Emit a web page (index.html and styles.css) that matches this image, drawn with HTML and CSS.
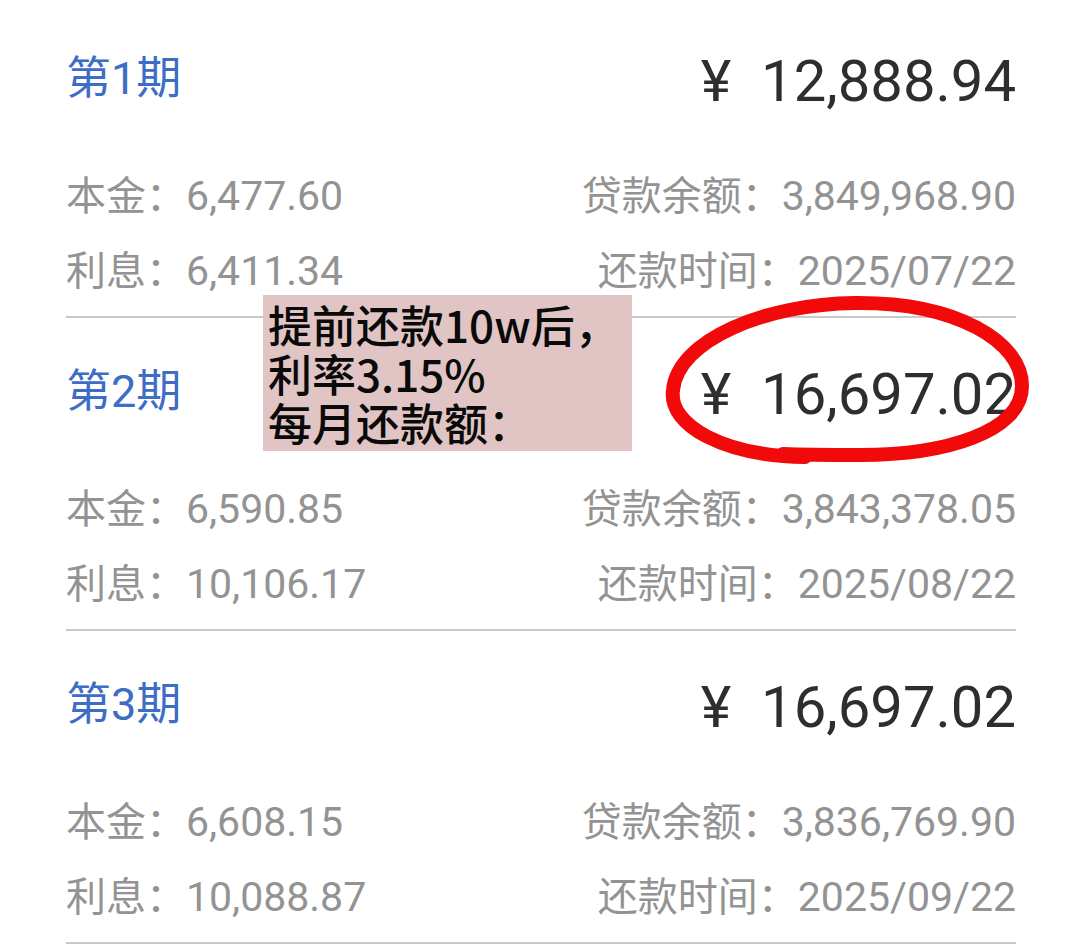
FILE: index.html
```html
<!DOCTYPE html>
<html lang="zh-CN">
<head>
<meta charset="utf-8">
<link rel="stylesheet" href="styles.css">
</head>
<body>
<div class="page">
  <div class="list">
    <section class="period">
      <div class="head">
        <div class="title">第1期</div>
        <div class="amount"><span class="yen">¥</span>12,888.94</div>
      </div>
      <div class="details">
        <div class="line"><span>本金：<span class="num">6,477.60</span></span><span>贷款余额：<span class="num">3,849,968.90</span></span></div>
        <div class="line"><span>利息：<span class="num">6,411.34</span></span><span>还款时间：<span class="num">2025/07/22</span></span></div>
      </div>
    </section>
    <section class="period">
      <div class="head">
        <div class="title">第2期</div>
        <div class="amount"><span class="yen">¥</span>16,697.02</div>
      </div>
      <div class="details">
        <div class="line"><span>本金：<span class="num">6,590.85</span></span><span>贷款余额：<span class="num">3,843,378.05</span></span></div>
        <div class="line"><span>利息：<span class="num">10,106.17</span></span><span>还款时间：<span class="num">2025/08/22</span></span></div>
      </div>
    </section>
    <section class="period">
      <div class="head">
        <div class="title">第3期</div>
        <div class="amount"><span class="yen">¥</span>16,697.02</div>
      </div>
      <div class="details">
        <div class="line"><span>本金：<span class="num">6,608.15</span></span><span>贷款余额：<span class="num">3,836,769.90</span></span></div>
        <div class="line"><span>利息：<span class="num">10,088.87</span></span><span>还款时间：<span class="num">2025/09/22</span></span></div>
      </div>
    </section>
  </div>

  <div class="note">提前还款10w后，<br>利率3.15%<br>每月还款额：</div>

  <svg class="circle" width="385" height="180" viewBox="0 0 385 180">
    <path d="M 150 167 C 70 166, 13 136, 18 100 C 23 50, 110 14, 200 13 C 302 12, 367 52, 367 96 C 367 142, 290 165, 205 165 C 178 165, 152 165, 128 164"
      fill="none" stroke="#f20a0a" stroke-width="14" stroke-linecap="round" stroke-linejoin="round"/>
  </svg>
</div>
</body>
</html>
```

FILE: styles.css
```css
html, body {
  margin: 0;
  padding: 0;
  background: #ffffff;
}

.page {
  position: relative;
  width: 1078px;
  height: 946px;
  overflow: hidden;
  font-family: Roboto, "Noto Sans CJK SC", sans-serif;
}

.list {
  padding: 5px 62px 0 66px;
}

.period {
  padding: 36px 0 7px;
  border-bottom: 2px solid #c9c9c9;
}

.head {
  display: flex;
  justify-content: space-between;
  align-items: center;
  height: 80px;
}

.title {
  font-size: 45px;
  color: #3d6dc4;
  padding-bottom: 14px;
}

.amount {
  font-size: 58px;
  color: #2e2e2e;
  padding-bottom: 1px;
}

.yen {
  margin-right: 30px;
}

.details {
  margin-top: 38px;
}

.line {
  display: flex;
  justify-content: space-between;
  height: 75px;
  line-height: 75px;
  font-size: 40px;
  color: #939393;
}

.num {
  font-size: 41px;
}

.note {
  position: absolute;
  left: 263px;
  top: 295px;
  width: 369px;
  height: 156px;
  box-sizing: border-box;
  padding: 5px 0 0 5px;
  background: #e0c5c4;
  color: #0a0a0a;
  font-family: "Noto Sans CJK SC", sans-serif;
  font-weight: 500;
  font-size: 44px;
  line-height: 49px;
  white-space: nowrap;
}

.circle {
  position: absolute;
  left: 655px;
  top: 290px;
}
```
